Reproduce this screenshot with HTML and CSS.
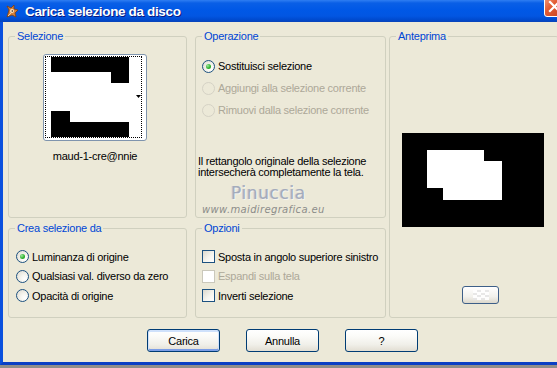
FILE: index.html
```html
<!DOCTYPE html>
<html lang="it">
<head>
<meta charset="utf-8">
<title>Carica selezione da disco</title>
<link rel="stylesheet" href="styles.css">
</head>
<body>
<div class="window">
  <div class="titlebar">
    <svg class="app-icon" width="15" height="15" viewBox="0 0 15 15">
      <path d="M3 13 L5 6 L3 2 L7 4 L10 1 L10 5 L14 6 L11 9 L12 13 L8 11 Z" fill="#d9823b" stroke="#7a3d12" stroke-width="0.8"/>
      <circle cx="8" cy="7" r="2" fill="#f6e2c4"/>
      <circle cx="8.3" cy="7" r="0.8" fill="#3a1a06"/>
      <path d="M4 12 L7 9" stroke="#f4d3a0" stroke-width="1"/>
    </svg>
    <span class="title">Carica selezione da disco</span>
    <div class="close">
      <svg width="21" height="21" viewBox="0 0 21 21"><path d="M6 6 L15 15 M15 6 L6 15" stroke="#fff" stroke-width="2.2" stroke-linecap="square"/></svg>
    </div>
  </div>
  <div class="client">
    <div class="panels">
      <fieldset class="group g-sel">
        <legend>Selezione</legend>
        <div class="thumb-wrap">
          <div class="thumb">
            <div class="focus">
              <svg class="thumb-img" width="78" height="80" viewBox="0 0 78 80">
                <rect width="78" height="80" fill="#000"/>
                <polygon points="0,15 60,15 60,26 78,26 78,65 19,65 19,54 0,54" fill="#fff"/>
              </svg>
              <div class="strip">
                <svg width="5" height="3" viewBox="0 0 5 3"><polygon points="0,0 5,0 2.5,3" fill="#000"/></svg>
              </div>
            </div>
          </div>
          <div class="thumb-name">maud-1-cre@nnie</div>
        </div>
      </fieldset>

      <fieldset class="group g-op">
        <legend>Operazione</legend>
        <div class="opt-list rows22">
          <label class="opt"><span class="radio checked"></span>Sostituisci selezione</label>
          <label class="opt disabled"><span class="radio"></span>Aggiungi alla selezione corrente</label>
          <label class="opt disabled"><span class="radio"></span>Rimuovi dalla selezione corrente</label>
        </div>
        <p class="note">Il rettangolo originale della selezione intersecherà completamente la tela.</p>
      </fieldset>

      <fieldset class="group g-prev">
        <legend>Anteprima</legend>
        <svg class="preview" width="142" height="94" viewBox="0 0 142 94">
          <rect width="142" height="94" fill="#000"/>
          <rect x="25" y="17" width="57" height="38" fill="#fff"/>
          <rect x="41" y="28" width="59" height="39" fill="#fff"/>
        </svg>
        <div class="bg-btn"><span class="checker"></span></div>
      </fieldset>

      <fieldset class="group g-crea">
        <legend>Crea selezione da</legend>
        <div class="opt-list rows20">
          <label class="opt"><span class="radio checked"></span>Luminanza di origine</label>
          <label class="opt"><span class="radio"></span>Qualsiasi val. diverso da zero</label>
          <label class="opt"><span class="radio"></span>Opacità di origine</label>
        </div>
      </fieldset>

      <fieldset class="group g-opz">
        <legend>Opzioni</legend>
        <div class="opt-list rows20">
          <label class="opt"><span class="check"></span>Sposta in angolo superiore sinistro</label>
          <label class="opt disabled"><span class="check"></span>Espandi sulla tela</label>
          <label class="opt"><span class="check"></span>Inverti selezione</label>
        </div>
      </fieldset>
    </div>

    <div class="buttons">
      <button class="btn default">Carica</button>
      <button class="btn">Annulla</button>
      <button class="btn">?</button>
    </div>

    <div class="watermark">
      <div class="wm-name">Pinuccia</div>
      <div class="wm-url">www.maidiregrafica.eu</div>
    </div>
  </div>
</div>
</body>
</html>
```

FILE: styles.css
```css
html, body {
  margin: 0;
  padding: 0;
}
body {
  width: 557px;
  height: 368px;
  overflow: hidden;
  background: #8f8e8b;
  font-family: "Liberation Sans", Arial, sans-serif;
  font-size: 11px;
  letter-spacing: -0.25px;
  color: #000;
}
.window {
  width: 564px;
  border-left: 3px solid #0a50de;
  border-bottom: 3px solid #0a3fc4;
  background: #ece9d8;
}
.titlebar {
  height: 22px;
  display: flex;
  align-items: center;
  overflow: hidden;
  margin-left: -3px;
  padding-left: 3px;
  background: linear-gradient(#2f7ef2 0, #0a5fe6 3px, #0058e6 10px, #0256e2 16px, #0049cc 20px, #0a44b8 22px);
}
.app-icon {
  margin-left: 1px;
  flex: none;
}
.title {
  margin-left: 6px;
  color: #fff;
  font-weight: bold;
  font-size: 13.5px;
  letter-spacing: -0.35px;
  text-shadow: 1px 1px 0 #0a1a80;
}
.close {
  margin-left: auto;
  margin-right: 2px;
  align-self: flex-start;
  margin-top: -4px;
  width: 21px;
  height: 21px;
  box-sizing: border-box;
  border: 1px solid #fff;
  border-radius: 3px;
  background: linear-gradient(135deg, #f09a7c 0, #e35c34 40%, #c8421e 100%);
  display: grid;
  place-items: center;
}
.close svg { display: block; margin: -1px; }

.client {
  position: relative;
  padding: 8px 0 10px 5px;
}
.panels {
  display: grid;
  grid-template-columns: 179px 8px 191px 3px 170px;
  grid-template-rows: 188px 4px 96px;
}
.group {
  margin: 0;
  padding: 0;
  border: 1px solid #d0d0bf;
  border-radius: 3px;
  min-width: 0;
  box-sizing: border-box;
}
.group legend {
  margin-left: 6px;
  padding: 0 2px;
  line-height: 13px;
  color: #0046d5;
}
.g-sel { grid-column: 1; grid-row: 1; }
.g-op { grid-column: 3; grid-row: 1; }
.g-prev { grid-column: 5; grid-row: 1 / 4; }
.g-crea { grid-column: 1; grid-row: 3; }
.g-opz { grid-column: 3; grid-row: 3; }

/* Selezione */
.thumb-wrap {
  width: 104px;
  margin: 11px 0 0 34px;
  display: flex;
  flex-direction: column;
  align-items: center;
}
.thumb {
  box-sizing: border-box;
  width: 104px;
  height: 87px;
  border: 1px solid #7f94ad;
  border-radius: 3px;
  background: #fff;
  padding: 1px 4px 2px 1px;
}
.focus {
  border: 1px dotted #000;
  height: 80px;
  display: flex;
  padding-left: 5px;
}
.thumb-img { display: block; flex: none; }
.strip {
  flex: 1;
  display: flex;
  align-items: center;
  justify-content: flex-end;
  padding: 0 0 2px 0;
}
.strip svg { display: block; }
.thumb-name {
  margin-top: 9px;
  line-height: 13px;
  white-space: nowrap;
}

/* option rows */
.opt-list {
  display: flex;
  flex-direction: column;
}
.opt {
  display: flex;
  align-items: center;
  gap: 3px;
  white-space: nowrap;
}
.rows22 { padding: 12px 0 0 6px; }
.rows22 .opt { height: 22px; }
.rows20 { padding: 12px 0 0 6px; }
.rows20 .opt { height: 19.5px; }
.g-crea .rows20 { padding-left: 7px; }
.opt.disabled { color: #aca899; }

.radio {
  flex: none;
  box-sizing: border-box;
  width: 13px;
  height: 13px;
  border-radius: 50%;
  border: 1px solid #1c5180;
  background: radial-gradient(circle at 70% 70%, #ffffff 0, #f6f5ef 35%, #dcd9ce 100%);
  display: grid;
  place-items: center;
}
.radio.checked::after {
  content: "";
  width: 5px;
  height: 5px;
  border-radius: 50%;
  background: radial-gradient(circle at 35% 35%, #9fe89f 0, #2fb32f 55%, #1f8f1f 100%);
}
.opt.disabled .radio {
  border-color: #d5d2c5;
  background: #ece9d8;
}
.check {
  flex: none;
  box-sizing: border-box;
  width: 13px;
  height: 13px;
  border: 1px solid #1c5180;
  background: linear-gradient(135deg, #dcd9ce 0, #f5f4ee 55%, #ffffff 100%);
}
.opt.disabled .check {
  border-color: #cac8bb;
  background: #fff;
}

.note {
  margin: 35px 0 0 2px;
  line-height: 11px;
}

/* Anteprima */
.preview {
  display: block;
  margin: 90px 0 0 12px;
}
.bg-btn {
  box-sizing: border-box;
  width: 37px;
  height: 18px;
  margin: 59px 0 0 72px;
  border: 1px solid #3d5f88;
  border-radius: 3px;
  background: linear-gradient(#ffffff, #f2f1ec 60%, #dcd8cc);
  display: grid;
  place-items: center;
}
.checker {
  width: 16px;
  height: 10px;
  background:
    conic-gradient(#e6e6e6 25%, #ffffff 0 50%, #e6e6e6 0 75%, #ffffff 0) 0 0 / 8px 5px;
  opacity: 0.9;
}

/* buttons */
.buttons {
  display: flex;
  gap: 26px;
  margin-top: 11px;
  padding-left: 139px;
}
.btn {
  box-sizing: border-box;
  width: 73px;
  height: 23px;
  padding: 0;
  border: 1px solid #003c74;
  border-radius: 3px;
  background: linear-gradient(#ffffff 0, #fbfbf8 30%, #f0efe9 70%, #e2ded3 100%);
  font-family: "Liberation Sans", Arial, sans-serif;
  font-size: 11px;
  letter-spacing: -0.25px;
  color: #000;
}
.btn.default {
  box-shadow: inset 0 1px 0 1px #cfe1fb, inset 0 -1px 0 1px #7b9de6;
}

/* watermark overlay */
.watermark {
  position: absolute;
  left: 196px;
  top: 162px;
  display: flex;
  flex-direction: column;
  pointer-events: none;
}
.wm-name {
  margin-left: 32px;
  font-family: "DejaVu Sans", sans-serif;
  font-size: 17px;
  letter-spacing: 0.6px;
  line-height: 18px;
  color: #a4abbb;
  text-shadow: 1px 1px 0 #f4f4f0, -1px 0 0 #c9ccd2;
}
.wm-url {
  margin-top: 3px;
  margin-left: 3px;
  font-family: "DejaVu Sans", sans-serif;
  font-style: italic;
  font-size: 10px;
  letter-spacing: 0.35px;
  line-height: 10px;
  color: #8d8d8a;
}
```
